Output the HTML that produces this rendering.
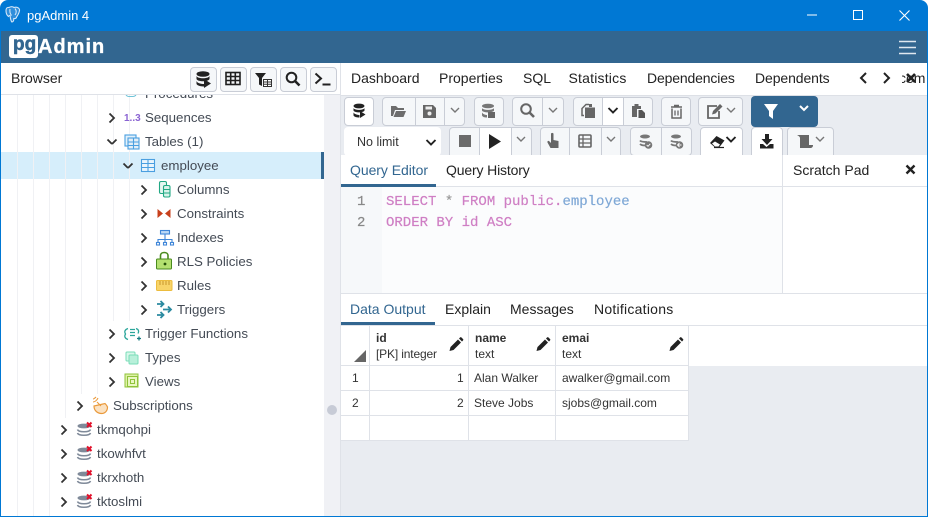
<!DOCTYPE html>
<html lang="en"><head><meta charset="utf-8"><title>pgAdmin 4</title>
<style>
html,body{margin:0;padding:0;width:928px;height:517px;overflow:hidden;background:#fff}
body{position:relative;font-family:"Liberation Sans",sans-serif;color:#222}
div{position:absolute;box-sizing:border-box}
.t{white-space:nowrap;font-size:14px;line-height:20px;height:20px}
.n{font-size:13.3px;color:#444b55;white-space:nowrap;line-height:20px;height:20px}
.b{background:#f5f7f9;border:1px solid #c9cdd6;border-radius:4px}
.w{background:#fff}
.c{font-family:"Liberation Mono",monospace;font-size:14px;line-height:20px;white-space:pre;height:20px;color:#cf7fc4;-webkit-text-stroke:.2px}
.g{font-size:12px;line-height:16px;height:16px;white-space:nowrap;color:#333}
.l{background:#f0f1f4;width:1px}
.hl{background:#dfe2e8}
svg{position:absolute;left:0;top:0}
</style></head><body>
<div style="left:0;top:0;width:928px;height:517px;background:#0078d4;border-radius:8px 8px 0 0"></div>
<div style="left:1px;top:31px;width:926px;height:485px;background:#fff"></div>
<div style="left:1px;top:31px;width:926px;height:32px;background:#326690"></div>
<div class="t" style="left:27px;top:6px;color:#fff;font-size:13px">pgAdmin 4</div>
<div style="left:9px;top:35px;width:29px;height:23px;background:#fff;border-radius:3px"></div>
<div style="left:13px;top:32px;font-size:19px;line-height:26px;font-weight:bold;color:#326690;white-space:nowrap;-webkit-text-stroke:.5px #326690">pg</div>
<div style="left:38px;top:34px;font-size:20px;line-height:26px;font-weight:bold;color:#fff;white-space:nowrap;letter-spacing:1px;-webkit-text-stroke:.3px #fff">Admin</div>

<!-- browser panel -->
<div class="t" style="left:11px;top:68px">Browser</div>
<div style="left:1px;top:94px;width:339px;height:1px;background:#dfe2e8"></div>
<div style="left:340px;top:63px;width:1px;height:453px;background:#dfe2e8"></div>
<div style="left:324px;top:95px;width:16px;height:421px;background:#f0f1f5"></div>
<div style="left:327px;top:405px;width:10px;height:10px;border-radius:5px;background:#c7cbd6"></div>
<div class="b" style="left:190px;top:67px;width:27px;height:25px"></div>
<div class="b" style="left:220px;top:67px;width:27px;height:25px"></div>
<div class="b" style="left:250px;top:67px;width:27px;height:25px"></div>
<div class="b" style="left:280px;top:67px;width:27px;height:25px"></div>
<div class="b" style="left:310px;top:67px;width:27px;height:25px"></div>

<!-- tree -->
<div style="left:1px;top:95px;width:323px;height:421px;overflow:hidden">
 <div style="left:0;top:57px;width:323px;height:27px;background:#d6eefb"></div>
 <div style="left:320px;top:57px;width:3px;height:27px;background:#326690"></div>
 <div class="l" style="left:16px;top:0;height:421px"></div>
 <div class="l" style="left:32px;top:0;height:421px"></div>
 <div class="l" style="left:48px;top:0;height:421px"></div>
 <div class="l" style="left:64px;top:0;height:323px"></div>
 <div class="l" style="left:80px;top:0;height:299px"></div>
 <div class="l" style="left:96px;top:0;height:299px"></div>
 <div class="l" style="left:112px;top:0;height:226px"></div>
 <div class="l" style="left:128px;top:0;height:226px"></div>
 <div class="n" style="left:144px;top:-11px">Procedures</div>
 <div class="n" style="left:144px;top:13px">Sequences</div>
 <div class="n" style="left:144px;top:37px">Tables (1)</div>
 <div class="n" style="left:160px;top:61px">employee</div>
 <div class="n" style="left:176px;top:85px">Columns</div>
 <div class="n" style="left:176px;top:109px">Constraints</div>
 <div class="n" style="left:176px;top:133px">Indexes</div>
 <div class="n" style="left:176px;top:157px">RLS Policies</div>
 <div class="n" style="left:176px;top:181px">Rules</div>
 <div class="n" style="left:176px;top:205px">Triggers</div>
 <div class="n" style="left:144px;top:229px">Trigger Functions</div>
 <div class="n" style="left:144px;top:253px">Types</div>
 <div class="n" style="left:144px;top:277px">Views</div>
 <div class="n" style="left:112px;top:301px">Subscriptions</div>
 <div class="n" style="left:96px;top:325px">tkmqohpi</div>
 <div class="n" style="left:96px;top:349px">tkowhfvt</div>
 <div class="n" style="left:96px;top:373px">tkrxhoth</div>
 <div class="n" style="left:96px;top:397px">tktoslmi</div>
 <div style="left:124px;top:-8px;width:12px;height:10px;border:1.5px solid #6fc4d8;border-top:0;border-radius:0 0 4px 4px"></div>
</div>

<!-- right tabs -->
<div class="t" style="left:351px;top:68px">Dashboard</div>
<div class="t" style="left:439px;top:68px">Properties</div>
<div class="t" style="left:523px;top:68px">SQL</div>
<div class="t" style="left:568.5px;top:68px;letter-spacing:.2px">Statistics</div>
<div class="t" style="left:647px;top:68px;letter-spacing:-.15px">Dependencies</div>
<div class="t" style="left:755px;top:68px;letter-spacing:-.1px">Dependents</div>
<div style="left:902px;top:63px;width:25px;height:32px;overflow:hidden"><div class="t" style="left:-3px;top:5px">cem</div></div>

<!-- toolbar -->
<div style="left:341px;top:95px;width:586px;height:60px;background:#e9ecf1;border-top:1px solid #dde0e6"></div>
<div class="b w" style="left:344px;top:97px;width:30px;height:29px"></div>
<div class="b" style="left:382px;top:97px;width:34px;height:29px;border-radius:4px 0 0 4px"></div>
<div class="b" style="left:415px;top:97px;width:30px;height:29px;border-radius:0"></div>
<div class="b" style="left:444px;top:97px;width:21px;height:29px;border-radius:0 4px 4px 0"></div>
<div class="b" style="left:474px;top:97px;width:30px;height:29px"></div>
<div class="b" style="left:512px;top:97px;width:31px;height:29px;border-radius:4px 0 0 4px"></div>
<div class="b" style="left:542px;top:97px;width:22px;height:29px;border-radius:0 4px 4px 0"></div>
<div class="b" style="left:573px;top:97px;width:30px;height:29px;border-radius:4px 0 0 4px"></div>
<div class="b w" style="left:602px;top:97px;width:22px;height:29px;border-radius:0"></div>
<div class="b" style="left:623px;top:97px;width:30px;height:29px;border-radius:0 4px 4px 0"></div>
<div class="b" style="left:661px;top:97px;width:30px;height:29px"></div>
<div class="b" style="left:698px;top:97px;width:45px;height:29px"></div>
<div style="left:751px;top:96px;width:67px;height:31px;background:#326690;border-radius:4px"></div>

<div style="left:344px;top:127px;width:97px;height:29px;background:#fff;border-radius:4px"></div>
<div class="t" style="left:357px;top:132px;font-size:12.5px;color:#333">No limit</div>
<div class="b" style="left:449px;top:127px;width:31px;height:32px;border-radius:4px 0 0 0"></div>
<div class="b w" style="left:479px;top:127px;width:33px;height:32px;border-radius:0"></div>
<div class="b" style="left:511px;top:127px;width:21px;height:32px;border-radius:0 4px 0 0"></div>
<div class="b" style="left:540px;top:127px;width:30px;height:32px;border-radius:4px 0 0 0"></div>
<div class="b" style="left:569px;top:127px;width:33px;height:32px;border-radius:0"></div>
<div class="b" style="left:601px;top:127px;width:20px;height:32px;border-radius:0 4px 0 0"></div>
<div class="b" style="left:630px;top:127px;width:32px;height:29px;border-radius:4px 0 0 4px"></div>
<div class="b" style="left:661px;top:127px;width:31px;height:29px;border-radius:0 4px 4px 0"></div>
<div class="b w" style="left:700px;top:127px;width:43px;height:32px"></div>
<div class="b w" style="left:751px;top:127px;width:32px;height:32px"></div>
<div class="b" style="left:787px;top:127px;width:47px;height:32px"></div>

<!-- query editor -->
<div style="left:341px;top:155px;width:586px;height:138px;background:#fff"></div>
<div style="left:341px;top:186px;width:586px;height:1px;background:#dfe2e8"></div>
<div style="left:341px;top:184px;width:95px;height:3px;background:#326690"></div>
<div class="t" style="left:350px;top:160px;color:#326690;letter-spacing:-.05px">Query Editor</div>
<div class="t" style="left:446px;top:160px;letter-spacing:-.15px">Query History</div>
<div style="left:341px;top:187px;width:441px;height:106px;background:#fbfcfd"></div>
<div style="left:341px;top:187px;width:41px;height:106px;background:#f6f8fa"></div>
<div style="left:782px;top:155px;width:1px;height:138px;background:#dfe2e8"></div>
<div class="t" style="left:793px;top:160px">Scratch Pad</div>
<div class="c" style="left:357px;top:192px;color:#888">1</div>
<div class="c" style="left:357px;top:213px;color:#888">2</div>
<div class="c" style="left:386px;top:192px">SELECT <span style="color:#999">*</span> FROM public.<span style="color:#7fa8d6">employee</span></div>
<div class="c" style="left:386px;top:213px">ORDER BY id ASC</div>

<!-- data output -->
<div style="left:341px;top:293px;width:586px;height:1px;background:#dfe2e8"></div>
<div class="t" style="left:350px;top:299px;color:#326690">Data Output</div>
<div class="t" style="left:445px;top:299px">Explain</div>
<div class="t" style="left:510px;top:299px">Messages</div>
<div class="t" style="left:594px;top:299px;letter-spacing:.25px">Notifications</div>
<div style="left:341px;top:322px;width:94px;height:3px;background:#326690"></div>
<div style="left:341px;top:325px;width:586px;height:1px;background:#dfe2e8"></div>
<div style="left:341px;top:366px;width:586px;height:150px;background:#e9ecf1"></div>
<div style="left:341px;top:366px;width:348px;height:75px;background:#fff"></div>
<div class="hl" style="left:341px;top:365px;width:348px;height:1px"></div>
<div class="hl" style="left:341px;top:390px;width:348px;height:1px"></div>
<div class="hl" style="left:341px;top:415px;width:348px;height:1px"></div>
<div class="hl" style="left:341px;top:440px;width:348px;height:1px"></div>
<div class="hl" style="left:369px;top:326px;width:1px;height:115px"></div>
<div class="hl" style="left:468px;top:326px;width:1px;height:115px"></div>
<div class="hl" style="left:555px;top:326px;width:1px;height:115px"></div>
<div class="hl" style="left:688px;top:326px;width:1px;height:115px"></div>
<div class="g" style="left:376px;top:330px;font-weight:bold">id</div>
<div class="g" style="left:376px;top:346px;letter-spacing:-.15px">[PK] integer</div>
<div class="g" style="left:475px;top:330px;font-weight:bold">name</div>
<div class="g" style="left:475px;top:346px">text</div>
<div class="g" style="left:562px;top:330px;font-weight:bold">emai</div>
<div class="g" style="left:562px;top:346px">text</div>
<div class="g" style="left:352px;top:370px">1</div>
<div class="g" style="left:352px;top:395px">2</div>
<div class="g" style="left:457px;top:370px">1</div>
<div class="g" style="left:457px;top:395px">2</div>
<div class="g" style="left:474px;top:370px">Alan Walker</div>
<div class="g" style="left:474px;top:395px">Steve Jobs</div>
<div class="g" style="left:562px;top:370px">awalker@gmail.com</div>
<div class="g" style="left:562px;top:395px">sjobs@gmail.com</div>

<svg width="928" height="517" viewBox="0 0 928 517" fill="none">
<defs>
<path id="r" d="M-2.500-4.500 2 0-2.500 4.500" stroke="#333" stroke-width="1.800"/>
<path id="d" d="M-4.500-2.500 0 2M4.500-2.500 0 2" stroke="#333" stroke-width="1.800"/>
<path id="v" d="M-4-2 0 2 4-2" stroke="#777" stroke-width="1.400"/>
<path id="vd" d="M-4.500-2 0 2.500 4.500-2" stroke="#222" stroke-width="1.900"/>
<path id="pen" d="M0 12l1-4 7.500-7.500 3 3L4 11zM9.500-.5l1-1a1 1 0 0 1 1.500 0l1.500 1.500a1 1 0 0 1 0 1.500l-1 1z" fill="#222"/>
<g id="dbx">
 <ellipse cx="7" cy="3" rx="6.500" ry="2.400" fill="#7f8a99"/>
 <path d="M.5 6.500c1 3 12 3 13 0M.5 10c1 3 12 3 13 0" stroke="#7f8a99" stroke-width="1.600"/>
 <path d="M10-.5l4.500 4.500M14.500-.5 10 4" stroke="#e0102a" stroke-width="2"/>
</g>
</defs>

<!-- title bar -->
<path d="M9 7.500c-2-.5-3 1-3 3 0 2.500 1.200 5 2.500 6 .6-1 1.200-1.200 1.500-1 .3 2 .6 5 1.800 6.500 1.500 0 2-1.800 2-3.500 1.500.3 2.500 0 2.800-1.500l1.500-2.500c1-2 2-4 1.200-5.500-1-1.800-3.500-2.200-5.300-1.500C12 6 10.300 6.800 9 7.500z" fill="#2f8edb" stroke="#d3e6f7" stroke-width="1.100"/>
<path d="M10 9c-.5 2.500 0 4.500 1.500 6.500M15 8.500c1.500 2 1.500 4.500 0 6.500" stroke="#d3e6f7" stroke-width="1.100"/>
<path d="M807 15h10" stroke="#fff"/>
<rect x="853.500" y="10.500" width="9" height="9" stroke="#fff"/>
<path d="M899.500 10.500l10 10M909.500 10.500l-10 10" stroke="#fff" stroke-width="1.100"/>
<path d="M899 41.500h17M899 47.500h17M899 53.500h17" stroke="#dfe8f0" stroke-width="1.600"/>

<!-- tree chevrons -->
<g transform="translate(0,1)">
<use href="#r" x="112" y="117"/><use href="#d" x="112" y="141"/><use href="#d" x="128" y="165"/>
<use href="#r" x="144" y="189"/><use href="#r" x="144" y="213"/><use href="#r" x="144" y="237"/><use href="#r" x="144" y="261"/><use href="#r" x="144" y="285"/><use href="#r" x="144" y="309"/>
<use href="#r" x="112" y="333"/><use href="#r" x="112" y="357"/><use href="#r" x="112" y="381"/><use href="#r" x="80" y="405"/>
<use href="#r" x="64" y="429"/><use href="#r" x="64" y="453"/><use href="#r" x="64" y="477"/><use href="#r" x="64" y="501"/>
</g>

<!-- tree icons -->
<text x="124" y="121" font-family="Liberation Sans" font-size="10" font-weight="bold" fill="#8a63d2">1..3</text>
<g stroke="#4a9fe0" stroke-width="1.100">
 <rect x="125" y="135" width="11" height="11" fill="#e3f1fb"/>
 <rect x="128" y="138" width="11" height="11" fill="#e3eef7"/>
 <path d="M128 142h11M128 145.500h11M133.500 138v11"/>
 <rect x="141.500" y="159.500" width="13" height="12" fill="#eaf5fd"/>
 <path d="M141.500 163.500h13M141.500 167.500h13M148 159.500v12"/>
</g>
<g stroke="#22a884" stroke-width="1.100">
 <rect x="159.500" y="181.500" width="7" height="12" rx="1.500" fill="#e6f7f1"/>
 <rect x="163.500" y="185.500" width="6.500" height="11.500" rx="1.500" fill="#d8f3ea"/>
 <path d="M163.500 189.500h6.500M163.500 193h6.500"/>
</g>
<path d="M157.500 209v9l5.500-4.500zM170.500 209v9l-5.500-4.500z" fill="#c8401c"/>
<g stroke="#3f86d8" stroke-width="1.100">
 <rect x="160.500" y="230.500" width="9" height="3.500" fill="#bcd9f5"/>
 <path d="M165 234v3M158 243v-3.500h14v3.500M165 237v6"/>
 <rect x="156.500" y="242.500" width="3" height="2.500" fill="#fff"/><rect x="163.500" y="242.500" width="3" height="2.500" fill="#fff"/><rect x="170.500" y="242.500" width="3" height="2.500" fill="#fff"/>
</g>
<path d="M160.500 259v-3.500c0-4 7.500-4 7.500 0v3.500" stroke="#4a8a1f" stroke-width="1.600"/>
<rect x="156.500" y="259" width="15" height="10" rx="1" fill="#b3e070" stroke="#4a8a1f"/>
<circle cx="165" cy="264" r="1.400" fill="#23500a"/>
<rect x="156.500" y="280.500" width="15.500" height="10" rx="1" fill="#f8d469" stroke="#ecbc3e"/>
<path d="M160 281v4M163 281v4M166 281v4M169 281v4" stroke="#c8962a"/>
<path d="M157 304h6M160.500 301l3 3-3 3M163 309.500h8M168 306.500l3 3-3 3M157 315h6M160.500 312l3 3-3 3" stroke="#2b8aa0" stroke-width="1.800"/>
<path d="M128 328.500c-3 1-4 3-2.500 5.500-1.500 2.500-.5 4.500 2.500 5.500M136 328.500c3 1 3 3 2 5" stroke="#2aa59a" stroke-width="1.300"/>
<path d="M130 329.500h5M130 332.500h5M130 335.500h5" stroke="#2aa59a" stroke-width="1.200"/>
<path d="M137 338.500h4M139 336.500v4" stroke="#177a80" stroke-width="1.300"/>
<rect x="126" y="352" width="9" height="9" rx="1" fill="#d8f7ea" stroke="#7adcb8"/>
<rect x="129" y="355" width="9" height="9" rx="1" fill="#b8f0da" stroke="#7adcb8"/>
<rect x="125" y="374" width="13" height="13" fill="#dff2a8" stroke="#8fc33a"/>
<rect x="127.500" y="376.500" width="10" height="10" fill="#e9f7c2" stroke="#8fc33a"/>
<rect x="130.500" y="379.500" width="4" height="4" stroke="#8fc33a"/>
<path d="M94 406c0 5 4 7.500 7.500 7.500 3.500 0 6-2.500 6-6.500-.5-1.500-1.500-2.500-2.500-3.500z" fill="#fbe2c2" stroke="#ea9a3c" stroke-width="1.200"/>
<path d="M97 402l4 4M93 399c1 0 2-1 3-2M93 402c2 0 4-2 5-4" stroke="#ea9a3c" stroke-width="1.100"/>
<use href="#dbx" x="77" y="423"/><use href="#dbx" x="77" y="447"/><use href="#dbx" x="77" y="471"/><use href="#dbx" x="77" y="495"/>

<!-- browser toolbar icons -->
<g fill="#222">
 <ellipse cx="203" cy="74" rx="6.500" ry="2.800"/>
 <path d="M196.500 76c1 3 12 3 13 0v3c-1 3-12 3-13 0zM196.500 81c1 3 7 3 8 3v2.500c-3 0-7-.5-8-2.500z"/>
 <path d="M204 79l7 4.500-7 4.500z"/>
</g>
<g stroke="#1f1f1f" stroke-width="1.600"><rect x="226" y="72.500" width="14" height="12"/><path d="M226 76.500h14M226 80.500h14M230.700 72.500v12M235.300 72.500v12"/></g>
<path d="M255 73h11l-4 5v8l-3-1.500V78z" fill="#222"/>
<g stroke="#333"><rect x="263.500" y="79.500" width="8" height="7" fill="#fff"/><path d="M263.500 82h8M263.500 84.300h8M267.500 79.500v7"/></g>
<circle cx="291.500" cy="77.500" r="4.800" stroke="#222" stroke-width="2"/><path d="M295 81l4.500 4.500" stroke="#222" stroke-width="2.600"/>
<path d="M315.500 73.500l5.500 5-5.500 5" stroke="#222" stroke-width="2"/><path d="M322.500 84.500h8" stroke="#222" stroke-width="2"/>

<!-- tab nav -->
<path d="M866 73l-5 5 5 5" stroke="#222" stroke-width="2"/>
<path d="M884 73l5 5-5 5" stroke="#222" stroke-width="2"/>
<path d="M907 74l8 8M915 74l-8 8" stroke="#222" stroke-width="2.600"/>
<path d="M906.500 165.500l8 8M914.500 165.500l-8 8" stroke="#222" stroke-width="2.400"/>

<!-- toolbar row 1 -->
<g fill="#222">
 <ellipse cx="359" cy="106" rx="5.500" ry="2.400"/>
 <path d="M353.500 108c1 2.500 10 2.500 11 0v2.500c-1 2.500-10 2.500-11 0zM353.500 112.500c1 2 5 2.500 6 2.500v2.500c-3 0-5-.5-6-2z"/>
 <path d="M360 111l5.500 3.500-5.500 3.500z" fill="#222"/>
</g>
<path d="M391 116v-10h5l2 2h6v2h-9l-2 6zM393.500 117l2.500-6h10l-2.500 6z" fill="#6d6d6d"/>
<path d="M423 105h10l3 3v10h-13z" fill="#666"/><rect x="425.500" y="106.500" width="6.500" height="3" fill="#eee"/><circle cx="429.500" cy="113.500" r="2" fill="#eee"/>
<use href="#v" x="455" y="110"/>
<ellipse cx="488" cy="106" rx="6" ry="2.300" fill="#777"/>
<path d="M482 108c1 2.500 11 2.500 12 0v2.500c-1 2.500-11 2.500-12 0zM482 112.500c1 2 4 2.500 5 2.500v2.500c-3 0-4-.5-5-2z" fill="#777"/><rect x="488" y="112" width="7" height="6" fill="#666"/>
<circle cx="526" cy="109" r="4.800" stroke="#666" stroke-width="2"/><path d="M529.500 112.500l4.500 4.500" stroke="#666" stroke-width="2.600"/>
<use href="#v" x="553" y="110"/>
<path d="M585.500 108h9v9.500h-9z" fill="#666" stroke="#666"/><path d="M589 104.500h-3l-4 4v7h2" stroke="#666" stroke-width="1.500"/><path d="M589 104h3v3h-3z" fill="#666"/>
<use href="#vd" x="613" y="110"/>
<path d="M632 106h9v3h-4v8h-5z" fill="#666"/><path d="M634.500 104h4v2h-4z" fill="#666"/><path d="M638.500 110h3.500l3 3v5h-6.500z" fill="#555"/>
<path d="M671 107h11M674 105.500h5M672 108.500v9.500h9v-9.500" stroke="#666" stroke-width="1.500"/><path d="M675 110.500v5M678 110.500v5" stroke="#666" stroke-width="1.300"/>
<path d="M717 106h-9v12h11v-7" stroke="#666" stroke-width="1.800"/><path d="M713 111l7-7 2.500 2.500-7 7-3.500 1z" fill="#666"/>
<use href="#v" x="731" y="110"/>
<path d="M764 104h14l-5 7v8l-4-3v-5z" fill="#fff"/>
<path d="M800 106l4 4 4-4" stroke="#fff" stroke-width="2"/>

<!-- toolbar row 2 -->
<use href="#vd" x="431" y="142"/>
<rect x="459" y="135" width="12" height="12" fill="#6b6b6b"/>
<path d="M489 134l12 7.500-12 7.500z" fill="#222"/>
<use href="#v" x="521" y="139"/>
<path d="M551 134v9l-2-2c-1-.5-2 .5-1.500 1.500l3 5.500h8v-7l-5-1v-6c0-1.500-2.500-1.500-2.500 0z" fill="#666"/>
<rect x="579" y="135" width="12" height="12" rx="1" stroke="#666" stroke-width="1.600"/><path d="M579 139h12M579 143h12M583 135v12" stroke="#666" stroke-width="1.300"/>
<use href="#v" x="611" y="139"/>
<ellipse cx="645" cy="136.500" rx="5" ry="2" fill="#777"/><path d="M640 140.500c1 1.500 5 1.500 7 1.500M640 144c1 1 3 1.500 5 1.500" stroke="#777" stroke-width="1.800"/><circle cx="648.500" cy="145" r="3.800" fill="#777"/><path d="M646.700 145l1.300 1.300 2.300-2.500" stroke="#fff" stroke-width=".9"/>
<ellipse cx="676" cy="136.500" rx="5" ry="2" fill="#777"/><path d="M671 140.500c1 1.500 5 1.500 7 1.500M671 144c1 1 3 1.500 5 1.500" stroke="#777" stroke-width="1.800"/><circle cx="679.500" cy="145" r="3.800" fill="#777"/><path d="M677.500 145h4M679.500 143l-2 2 2 2" stroke="#fff" stroke-width=".9"/>
<path d="M710 143l6.500-7 8 4.500-5 6.500h-5z" fill="#222"/><path d="M712 143.500l3 3h3.500l1.500-2-5-3z" fill="#fff"/><path d="M714 147.500h10" stroke="#222" stroke-width="1.200"/>
<use href="#vd" x="731" y="139"/>
<path d="M765 134h4v5h3.500l-5.500 6-5.500-6h3.500z" fill="#222"/><path d="M760 144h3l3.500 3 3.500-3h3.500v4.500h-13.500z" fill="#222"/>
<path d="M797 135h12v10h4c0 2-1 3-3 3h-10v-10c0-1-1-2-3-3z" fill="#666"/>
<use href="#v" x="820" y="139"/>

<!-- grid -->
<path d="M366 350v12h-12z" fill="#666"/>
<use href="#pen" x="449.500" y="339"/>
<use href="#pen" x="536.500" y="339"/>
<use href="#pen" x="669.500" y="339"/>
</svg>
</body></html>
